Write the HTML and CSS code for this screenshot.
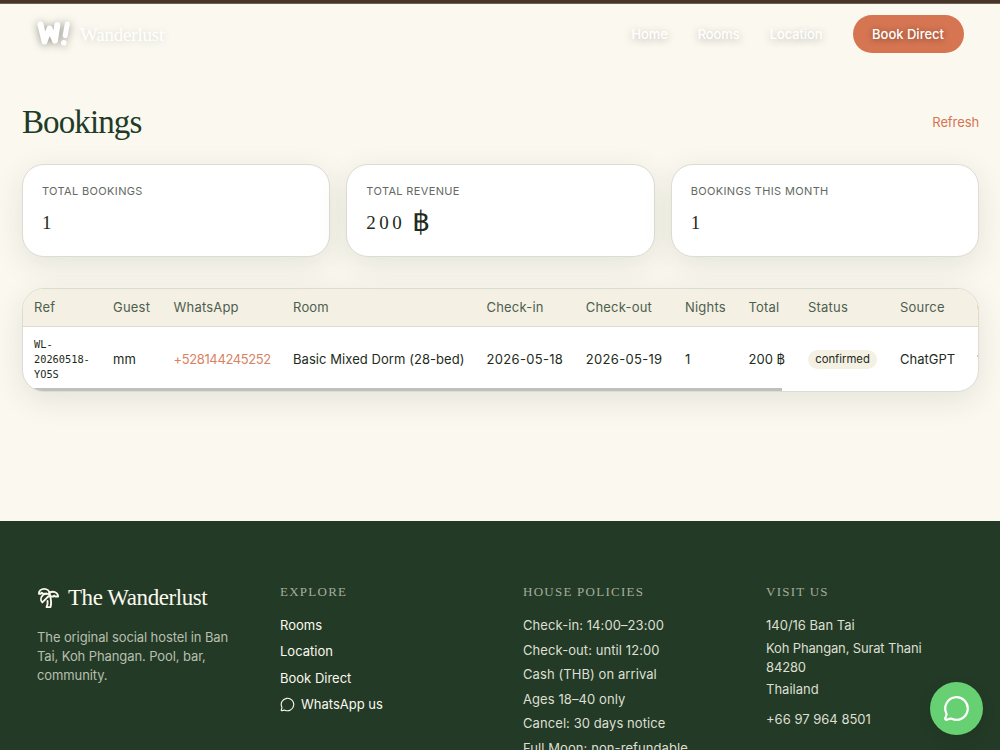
FILE: index.html
```html
<!DOCTYPE html>
<html lang="en">
<head>
  <meta charset="UTF-8" />
  <meta name="viewport" content="width=device-width, initial-scale=1.0"/>
  <title>Bookings - Wanderlust</title>
  <link rel="stylesheet" href="styles.css">
</head>
<body>

  <div class="top-strip"></div>

  <header class="site-header">
    <a class="brand">
      <svg class="brand-mark" viewBox="0 0 34 26" fill="none" stroke="#fff" stroke-linecap="round" stroke-linejoin="round">
        <path d="M3.500 3.500 7.500 20.500 12.500 7.500 18 19.500 20.300 4" stroke-width="6"/>
        <path d="M30.300 3 28.200 14.500" stroke-width="5"/>
        <circle cx="26.800" cy="21.800" r="2.700" fill="#fff" stroke="none"/>
      </svg>
      <span class="brand-name">Wanderlust</span>
    </a>
    <nav class="main-nav">
      <a class="nav-home">Home</a>
      <a class="nav-rooms">Rooms</a>
      <a class="nav-location">Location</a>
      <a class="book-btn"><span>Book Direct</span></a>
    </nav>
  </header>

  <main>
    <div class="page-head">
      <h1>Bookings</h1>
      <a class="refresh">Refresh</a>
    </div>

    <div class="stats">
      <div class="stat">
        <div class="stat-label">Total bookings</div>
        <div class="stat-value">1</div>
      </div>
      <div class="stat">
        <div class="stat-label">Total revenue</div>
        <div class="stat-value"><span class="amount">200</span><span class="baht">฿</span></div>
      </div>
      <div class="stat">
        <div class="stat-label">Bookings this month</div>
        <div class="stat-value">1</div>
      </div>
    </div>

    <div class="table-card">
      <table>
        <colgroup>
          <col class="c-ref"><col class="c-guest"><col class="c-phone"><col class="c-room">
          <col class="c-date"><col class="c-date"><col class="c-nights"><col class="c-total">
          <col class="c-status"><col class="c-source"><col class="c-created">
        </colgroup>
        <thead>
          <tr>
            <th>Ref</th><th>Guest</th><th>WhatsApp</th><th>Room</th>
            <th>Check-in</th><th>Check-out</th><th>Nights</th><th>Total</th>
            <th>Status</th><th>Source</th><th>Created</th>
          </tr>
        </thead>
        <tbody>
          <tr>
            <td class="ref">WL-<br>20260518-<br>YO5S</td>
            <td>mm</td>
            <td class="phone">+528144245252</td>
            <td class="room">Basic Mixed Dorm (28-bed)</td>
            <td class="date">2026-05-18</td>
            <td class="date">2026-05-19</td>
            <td>1</td>
            <td>200 ฿</td>
            <td><span class="pill">confirmed</span></td>
            <td>ChatGPT</td>
            <td>18 May</td>
          </tr>
        </tbody>
      </table>
      <div class="scrollbar"><div class="thumb"></div></div>
    </div>
  </main>

  <footer>
    <div class="footer-about">
      <div class="footer-brand">
        <svg class="palm" viewBox="0 0 24 24" fill="none" stroke="currentColor" stroke-width="2" stroke-linecap="round" stroke-linejoin="round">
          <path d="M13 8c0-2.760-2.460-5-5.500-5S2 5.240 2 8h2l1-1 1 1h4"/>
          <path d="M13 7.140A5.820 5.820 0 0 1 16.500 6c3.040 0 5.500 2.240 5.500 5h-3l-1-1-1 1h-3"/>
          <path d="M5.890 9.710c-2.150 2.150-2.300 5.470-.35 7.430l4.240-4.250.7-.7.710-.710 2.120-2.120c-1.950-1.960-5.270-1.800-7.420.35"/>
          <path d="M11 15.500c.5 2.500-.17 4.500-1 6.500h4c2-5.500-.5-12-1-14"/>
        </svg>
        <span>The Wanderlust</span>
      </div>
      <p>The original social hostel in Ban<br>Tai, Koh Phangan. Pool, bar,<br>community.</p>
    </div>

    <div class="footer-col links">
      <h4>Explore</h4>
      <a>Rooms</a>
      <a>Location</a>
      <a>Book Direct</a>
      <a class="wa">
        <svg viewBox="0 0 24 24" fill="none" stroke="currentColor" stroke-width="1.800" stroke-linecap="round" stroke-linejoin="round">
          <path d="M2.992 16.342a2 2 0 0 1 .094 1.167l-1.065 3.290a1 1 0 0 0 1.236 1.168l3.413-.998a2 2 0 0 1 1.099.092 10 10 0 1 0-4.777-4.719"/>
        </svg>
        <span>WhatsApp us</span>
      </a>
    </div>

    <div class="footer-col policies">
      <h4>House policies</h4>
      <span>Check-in: 14:00–23:00</span>
      <span>Check-out: until 12:00</span>
      <span>Cash (THB) on arrival</span>
      <span>Ages 18–40 only</span>
      <span>Cancel: 30 days notice</span>
      <span>Full Moon: non-refundable</span>
    </div>

    <div class="footer-col visit">
      <h4>Visit us</h4>
      <span>140/16 Ban Tai</span>
      <span class="street">Koh Phangan, Surat Thani<br>84280</span>
      <span>Thailand</span>
      <span class="tel">+66 97 964 8501</span>
    </div>
  </footer>

  <a class="chat-btn">
    <svg viewBox="0 0 24 24" fill="none" stroke="currentColor" stroke-width="2" stroke-linecap="round" stroke-linejoin="round">
      <path d="M2.992 16.342a2 2 0 0 1 .094 1.167l-1.065 3.290a1 1 0 0 0 1.236 1.168l3.413-.998a2 2 0 0 1 1.099.092 10 10 0 1 0-4.777-4.719"/>
    </svg>
  </a>

</body>
</html>
```
FILE: styles.css
```css
* { box-sizing: border-box; }

body {
  margin: 0;
  height: 750px;
  overflow: hidden;
  font-family: "Inter", "Liberation Sans", sans-serif;
  font-size: 13px;
  line-height: 19px;
  color: #1d2b20;
  background: #fbf8ef;
  display: flex;
  flex-direction: column;
}

h1, h4, p { margin: 0; font-weight: 400; }

.top-strip {
  height: 4px;
  flex-shrink: 0;
  background: #48352a;
  border-bottom: 1px solid #6f6255;
}

/* header */
.site-header {
  height: 60px;
  flex-shrink: 0;
  padding: 0 36.500px 0 37px;
  display: flex;
  justify-content: space-between;
  align-items: center;
  color: #fff;
}

.brand {
  display: flex;
  align-items: center;
  gap: 9px;
}

.brand-mark {
  width: 34px;
  height: 26px;
  filter: drop-shadow(0 1px 4px rgba(0,0,0,0.4));
}

.brand-name {
  font-family: "Liberation Serif", serif;
  font-size: 19px;
  letter-spacing: -0.200px;
  text-shadow: 0 1px 8px rgba(0,0,0,0.18);
}

.main-nav {
  display: flex;
  align-items: center;
  gap: 30px;
  font-weight: 500;
  letter-spacing: -0.100px;
  text-shadow: 0 2px 8px rgba(0,0,0,0.3);
}

.book-btn {
  width: 111px;
  height: 38px;
  border-radius: 19px;
  background: #d67552;
  letter-spacing: 0;
  text-shadow: 0 1px 6px rgba(0,0,0,0.45);
  display: flex;
  justify-content: center;
  align-items: center;
}

/* page */
main {
  height: 457px;
  flex-shrink: 0;
  padding: 37px 21px 0 22px;
}

.page-head {
  display: flex;
  justify-content: space-between;
  align-items: center;
  height: 43px;
}

h1 {
  font-family: "Liberation Serif", serif;
  font-size: 33px;
  line-height: 43px;
  letter-spacing: -0.900px;
  color: #213b26;
}

.refresh { color: #d67552; letter-spacing: -0.100px; }

.stats {
  display: grid;
  grid-template-columns: repeat(3, 1fr);
  gap: 16px;
  margin-top: 20px;
}

.stat {
  height: 92.500px;
  padding: 17px 19px;
  background: #fff;
  border: 1px solid #dddcd2;
  border-radius: 22px;
  box-shadow: 0 8px 30px rgba(33,59,38,0.1);
}

.stat-label {
  font-size: 11px;
  letter-spacing: 0.350px;
  text-transform: uppercase;
  color: #626a62;
}

.stat-value {
  display: flex;
  gap: 7px;
  margin-top: 6px;
  height: 32px;
  line-height: 32px;
  font-family: "Liberation Serif", serif;
  font-size: 19px;
}

.amount { letter-spacing: 3.500px; }

.baht {
  font-family: "Noto Sans", "DejaVu Sans", sans-serif;
  font-size: 28px;
  line-height: 26px;
}

.table-card {
  margin-top: 31px;
  height: 104.500px;
  overflow: hidden;
  background: #fff;
  border: 1px solid #dddcd2;
  border-radius: 22px;
  box-shadow: 0 8px 30px rgba(33,59,38,0.1);
}

table {
  table-layout: fixed;
  width: 1038px;
  border-collapse: separate;
  border-spacing: 0;
}

.c-ref { width: 79px; }
.c-guest { width: 60.500px; }
.c-phone { width: 119.500px; }
.c-room { width: 193.500px; }
.c-date { width: 99.250px; }
.c-nights { width: 63.500px; }
.c-total { width: 59.500px; }
.c-status { width: 92px; }
.c-source { width: 77px; }
.c-created { width: 95px; }

th, td {
  padding: 0 0 0 11px;
  text-align: left;
  white-space: nowrap;
}

th {
  height: 38px;
  font-weight: 400;
  letter-spacing: 0.200px;
  color: #4d5f4e;
  background: #f4f0e4;
  border-bottom: 1px solid #dddcd2;
}

td { height: 61px; padding-top: 4px; }

.ref {
  font-family: "DejaVu Sans Mono", monospace;
  font-size: 10.300px;
  line-height: 15px;
}

.phone { color: #d98263; letter-spacing: -0.380px; }

.room { letter-spacing: 0.060px; }

.date { letter-spacing: 0.320px; }

.pill {
  display: inline-block;
  width: 69px;
  height: 19px;
  border-radius: 10px;
  background: #f4f0e4;
  font-size: 11.300px;
  line-height: 19px;
  text-align: center;
  vertical-align: 1px;
}

.scrollbar { height: 4px; }

.thumb {
  width: 759px;
  height: 4px;
  background: #bfbfbd;
}

/* footer */
footer {
  flex: 1;
  min-height: 0;
  padding: 61px 36px 0 37px;
  display: grid;
  grid-template-columns: repeat(4, 1fr);
  column-gap: 45px;
  background: #233b26;
  color: #dddfd2;
}

.footer-brand {
  display: flex;
  align-items: center;
  gap: 8px;
  height: 30px;
  font-family: "Liberation Serif", serif;
  font-size: 23px;
  letter-spacing: -0.430px;
  color: #fbf8ee;
}

.palm { width: 23px; height: 23px; }

.footer-about p {
  margin-top: 16px;
  letter-spacing: -0.100px;
  color: #b8bfaf;
}

.footer-col {
  display: flex;
  flex-direction: column;
  white-space: nowrap;
}

h4 {
  margin: 0 0 15px;
  font-family: "Liberation Serif", serif;
  font-size: 13px;
  line-height: 19px;
  letter-spacing: 1.250px;
  text-transform: uppercase;
  color: #a3ad9c;
}

.links a { margin-bottom: 7.400px; color: #fbf8ee; }

.wa {
  display: flex;
  align-items: center;
  gap: 6px;
}

.wa svg { width: 15px; height: 15px; }

.policies span { margin-bottom: 5.600px; letter-spacing: 0.080px; }

.visit span { margin-bottom: 4px; }

.visit .street { line-height: 18.500px; letter-spacing: -0.150px; }

.visit .tel { margin-top: 7px; }

.chat-btn {
  position: fixed;
  right: 17px;
  bottom: 15px;
  width: 53.500px;
  height: 53.500px;
  border-radius: 50%;
  background: #66d072;
  color: #fff;
  display: flex;
  justify-content: center;
  align-items: center;
  box-shadow: 0 4px 14px rgba(0,0,0,0.12);
}

.chat-btn svg { width: 27px; height: 27px; }
```
